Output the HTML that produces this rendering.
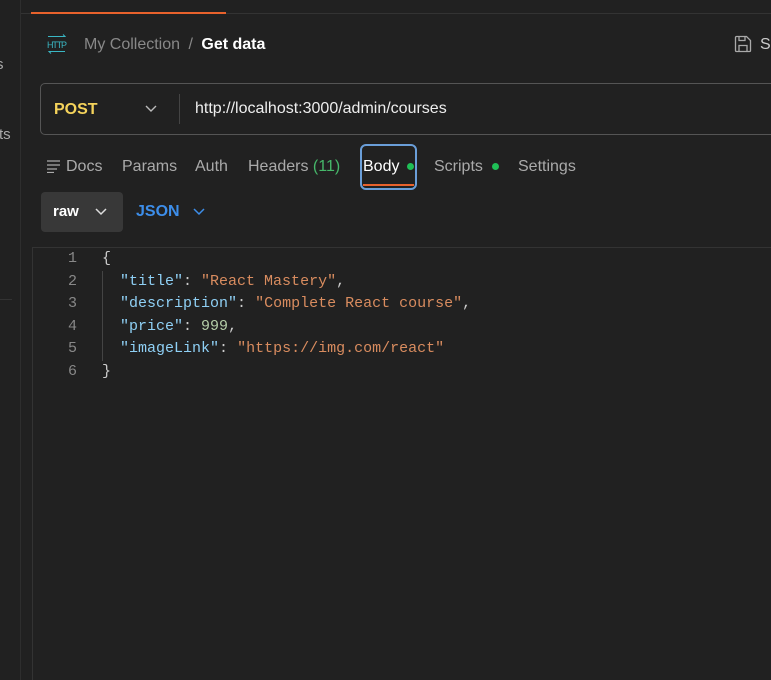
<!DOCTYPE html>
<html><head><style>
*{margin:0;padding:0;box-sizing:border-box}
body{width:771px;height:680px;background:#212121;font-family:"Liberation Sans",sans-serif;position:relative;overflow:hidden;color:#ccc}
.a{position:absolute;white-space:nowrap}
.mono{font-family:"Liberation Mono",monospace;font-size:15px}
.t{font-size:16px;color:#aaa;top:158px}
</style></head><body>
<div class="a" style="left:20px;top:0;width:1px;height:680px;background:#2e2e2e"></div>
<div class="a" style="left:21px;top:13px;width:750px;height:1px;background:#333"></div>
<div class="a" style="left:31px;top:12px;width:195px;height:2px;background:#e8622c"></div>
<div class="a" style="left:-4px;top:56px;font-size:15px;color:#aaa">s</div>
<div class="a" style="left:-1px;top:126px;font-size:15px;color:#aaa">ts</div>
<div class="a" style="left:0;top:299px;width:12px;height:1px;background:#333"></div>

<svg class="a" style="left:46px;top:34px" width="22" height="20" viewBox="0 0 22 20"><text x="1" y="14" font-size="9" textLength="20" fill="#3ab7c4" font-family="Liberation Sans">HTTP</text><path d="M2 2.5h17l-2-2M19 17.5H3l2 2" stroke="#3ab7c4" fill="none" stroke-width="1"/></svg>
<div class="a" style="left:84px;top:36px;font-size:16px;color:#888">My Collection <span style="margin:0 4px">/</span> <b style="color:#fff">Get data</b></div>
<svg class="a" style="left:734px;top:35px" width="18" height="18" viewBox="0 0 18 18" fill="none" stroke="#aaa" stroke-width="1.3"><path d="M1.5 2.5a1 1 0 0 1 1-1h10l4 4v10a1 1 0 0 1-1 1h-13a1 1 0 0 1-1-1z"/><path d="M5 1.5v4h6v-4M5 16.5v-6h8v6"/></svg>
<div class="a" style="left:760px;top:36px;font-size:16px;color:#ccc">Sa</div>

<div class="a" style="left:40px;top:83px;width:760px;height:52px;border:1px solid #555;border-radius:5px"></div>
<div class="a" style="left:54px;top:101px;font-size:16px;font-weight:bold;color:#f5d35b">POST</div>
<svg class="a" style="left:145px;top:105px" width="12" height="8"><path d="M1 1l5 5 5-5" stroke="#bbb" fill="none" stroke-width="1.4"/></svg>
<div class="a" style="left:179px;top:94px;width:1px;height:30px;background:#444"></div>
<div class="a" style="left:195px;top:100px;font-size:16px;color:#eee">http://localhost:3000/admin/courses</div>

<svg class="a" style="left:47px;top:159px" width="14" height="14"><path d="M0 2h13M0 6h13M0 10h10M0 13.5h7" stroke="#aaa" stroke-width="1.3"/></svg>
<div class="a t" style="left:66px">Docs</div>
<div class="a t" style="left:122px">Params</div>
<div class="a t" style="left:195px">Auth</div>
<div class="a t" style="left:248px">Headers <span style="color:#46b86a">(11)</span></div>
<div class="a" style="left:360px;top:144px;width:57px;height:46px;border:2px solid #6a9ed8;border-radius:6px"></div>
<div class="a" style="left:363px;top:184px;width:51px;height:2px;background:#e8622c"></div>
<div class="a t" style="left:363px;color:#fff">Body</div>
<div class="a" style="left:407px;top:163px;width:7px;height:7px;border-radius:50%;background:#1fbf56"></div>
<div class="a t" style="left:434px">Scripts</div>
<div class="a" style="left:492px;top:163px;width:7px;height:7px;border-radius:50%;background:#1fbf56"></div>
<div class="a t" style="left:518px">Settings</div>

<div class="a" style="left:41px;top:192px;width:82px;height:40px;background:#383838;border-radius:4px"></div>
<div class="a" style="left:53px;top:203px;font-size:15px;font-weight:bold;color:#fff">raw</div>
<svg class="a" style="left:95px;top:208px" width="12" height="8"><path d="M1 1l5 5 5-5" stroke="#ddd" fill="none" stroke-width="1.5"/></svg>
<div class="a" style="left:136px;top:203px;font-size:16px;font-weight:bold;color:#3d8eea">JSON</div>
<svg class="a" style="left:193px;top:208px" width="12" height="8"><path d="M1 1l5 5 5-5" stroke="#3d8eea" fill="none" stroke-width="1.5"/></svg>

<div class="a" style="left:32px;top:247px;width:739px;height:1px;background:#333"></div>
<div class="a" style="left:32px;top:247px;width:1px;height:433px;background:#333"></div>
<div class="a" style="left:102px;top:271px;width:1px;height:90px;background:#444"></div>
<div class="a mono" style="left:55px;top:248px;line-height:22.6px;color:#888;text-align:right;width:22px">1<br>2<br>3<br>4<br>5<br>6</div>
<div class="a mono" style="left:102px;top:248px;line-height:22.6px;color:#ccc"><span>{</span><br>
&nbsp;&nbsp;<span style="color:#8fd0f5">"title"</span>: <span style="color:#d98c5f">"React Mastery"</span>,<br>
&nbsp;&nbsp;<span style="color:#8fd0f5">"description"</span>: <span style="color:#d98c5f">"Complete React course"</span>,<br>
&nbsp;&nbsp;<span style="color:#8fd0f5">"price"</span>: <span style="color:#b5cea8">999</span>,<br>
&nbsp;&nbsp;<span style="color:#8fd0f5">"imageLink"</span>: <span style="color:#d98c5f">"https://img.com/react"</span><br>
}</div>
</body></html>
